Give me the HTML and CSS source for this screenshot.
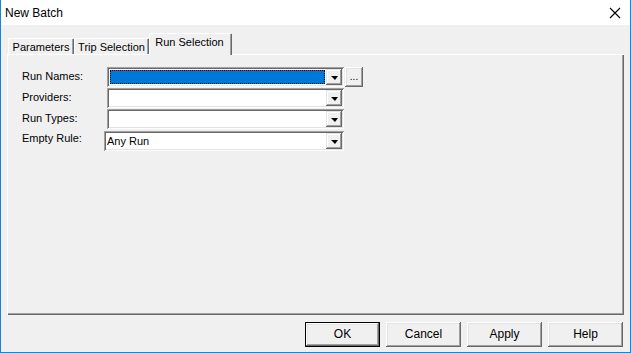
FILE: index.html
```html
<!DOCTYPE html>
<html>
<head>
<meta charset="utf-8">
<link rel="stylesheet" href="styles.css">
</head>
<body>
<div class="window">
  <div class="titlebar">
    <span class="title">New Batch</span>
    <svg class="close" width="12" height="12" viewBox="0 0 12 12"><path d="M1 1 L11 11 M11 1 L1 11" stroke="#000" stroke-width="1.1" fill="none"/></svg>
  </div>
  <div class="client">
    <div class="tabs">
      <div class="tab tab-params">Parameters</div>
      <div class="tab tab-trip">Trip Selection</div>
      <div class="tab tab-active">Run Selection</div>
    </div>
    <div class="panel">
      <div class="row">
        <span class="label">Run Names:</span>
        <div class="combo combo-std">
          <div class="field"><div class="selected"></div></div>
          <div class="dropbtn"><span class="arrow"></span></div>
        </div>
        <div class="ellipsis">...</div>
      </div>
      <div class="row">
        <span class="label">Providers:</span>
        <div class="combo combo-std">
          <div class="field"></div>
          <div class="dropbtn"><span class="arrow"></span></div>
        </div>
      </div>
      <div class="row">
        <span class="label">Run Types:</span>
        <div class="combo combo-std">
          <div class="field"></div>
          <div class="dropbtn"><span class="arrow"></span></div>
        </div>
      </div>
      <div class="row row-last">
        <span class="label label-short">Empty Rule:</span>
        <div class="combo combo-rule">
          <div class="field field-text">Any Run</div>
          <div class="dropbtn"><span class="arrow"></span></div>
        </div>
      </div>
    </div>
    <div class="buttons">
      <div class="btn btn-default">OK</div>
      <div class="btn">Cancel</div>
      <div class="btn">Apply</div>
      <div class="btn">Help</div>
    </div>
  </div>
</div>
</body>
</html>
```

FILE: styles.css
```css
html, body {
  margin: 0;
  padding: 0;
  background: #f0f0f0;
}
.window {
  width: 631px;
  height: 353px;
  box-sizing: border-box;
  border: 1px solid #1883d7;
  border-top: none;
  background: #f0f0f0;
  font-family: "Liberation Sans", Arial, sans-serif;
  font-size: 11px;
  color: #000;
  display: flex;
  flex-direction: column;
}
.titlebar {
  height: 25px;
  background: #fff;
  display: flex;
  align-items: center;
  justify-content: space-between;
  padding: 0 9px 0 4px;
  font-size: 12px;
  flex: none;
}
.title {
  margin-top: 1px;
}
.close {
  display: block;
  margin-top: 1px;
}
.client {
  flex: 1;
  display: flex;
  flex-direction: column;
  padding: 0 6px 0 6px;
}
.tabs {
  display: flex;
  align-items: flex-end;
  height: 21px;
  margin-top: 8px;
  padding-left: 1px;
}
.tab {
  height: 16px;
  box-sizing: border-box;
  display: flex;
  align-items: center;
  justify-content: center;
  box-shadow: inset 1px 1px #fff, inset -1px 0 #696969, inset -2px 0 #a0a0a0;
  border-top-left-radius: 1px;
  border-top-right-radius: 1px;
  padding-top: 1px;
}
.tab-params { width: 66px; }
.tab-trip { width: 75px; }
.tab-active {
  width: 83px;
  height: 22px;
  margin-bottom: -1px;
  position: relative;
  z-index: 2;
  background: #f0f0f0;
  align-items: flex-start;
  padding-top: 3px;
  padding-right: 2px;
}
.panel {
  height: 261px;
  box-sizing: border-box;
  box-shadow: inset 1px 1px #fff, inset -1px -1px #696969, inset -2px -2px #a0a0a0;
  padding: 13px 0 0 15px;
  display: flex;
  flex-direction: column;
  gap: 1px;
}
.row {
  display: flex;
  align-items: center;
  height: 20px;
}
.row-last {
  margin-top: 1px;
}
.label {
  width: 85px;
  flex: none;
  margin-top: -2px;
}
.label-short {
  width: 82px;
  margin-top: -7px;
}
.combo {
  height: 20px;
  box-sizing: border-box;
  display: flex;
  background: #fff;
  padding: 2px;
  box-shadow: inset 1px 1px #a0a0a0, inset -1px -1px #fff, inset 2px 2px #696969, inset -2px -2px #e3e3e3;
}
.combo-std { width: 237px; }
.combo-rule { width: 240px; }
.field {
  flex: 1;
  display: flex;
  padding: 1px 1px 1px 1px;
}
.field-text {
  align-items: center;
  padding-left: 1px;
}
.selected {
  flex: 1;
  background: #0078d7;
  outline: 1px dotted #000;
  outline-offset: -1px;
}
.dropbtn {
  width: 16px;
  height: 16px;
  box-sizing: border-box;
  background: #f0f0f0;
  display: flex;
  align-items: center;
  justify-content: center;
  box-shadow: inset -1px -1px #696969, inset 1px 1px #e3e3e3, inset -2px -2px #a0a0a0, inset 2px 2px #fff;
}
.arrow {
  width: 0;
  height: 0;
  border-left: 4px solid transparent;
  border-right: 3px solid transparent;
  border-top: 4px solid #000;
  margin-top: 1px;
}
.ellipsis {
  width: 18px;
  height: 20px;
  margin-left: 1px;
  box-sizing: border-box;
  display: flex;
  align-items: center;
  justify-content: center;
  color: #000;
  font-size: 10px;
  padding-bottom: 2px;
  box-shadow: inset -1px -1px #696969, inset 1px 1px #fff, inset -2px -2px #a0a0a0, inset 2px 2px #e3e3e3;
}
.buttons {
  display: flex;
  justify-content: flex-end;
  gap: 6px;
  margin-top: 7px;
  padding-right: 1px;
}
.btn {
  width: 75px;
  height: 25px;
  box-sizing: border-box;
  display: flex;
  align-items: center;
  justify-content: center;
  font-size: 12px;
  padding-bottom: 1px;
  box-shadow: inset -1px -1px #696969, inset 1px 1px #fff, inset -2px -2px #a0a0a0, inset 2px 2px #e3e3e3;
}
.btn-default {
  box-shadow: inset 0 0 0 1px #000, inset -2px -2px #696969, inset 2px 2px #fff, inset -3px -3px #a0a0a0, inset 3px 3px #e3e3e3;
}
```
